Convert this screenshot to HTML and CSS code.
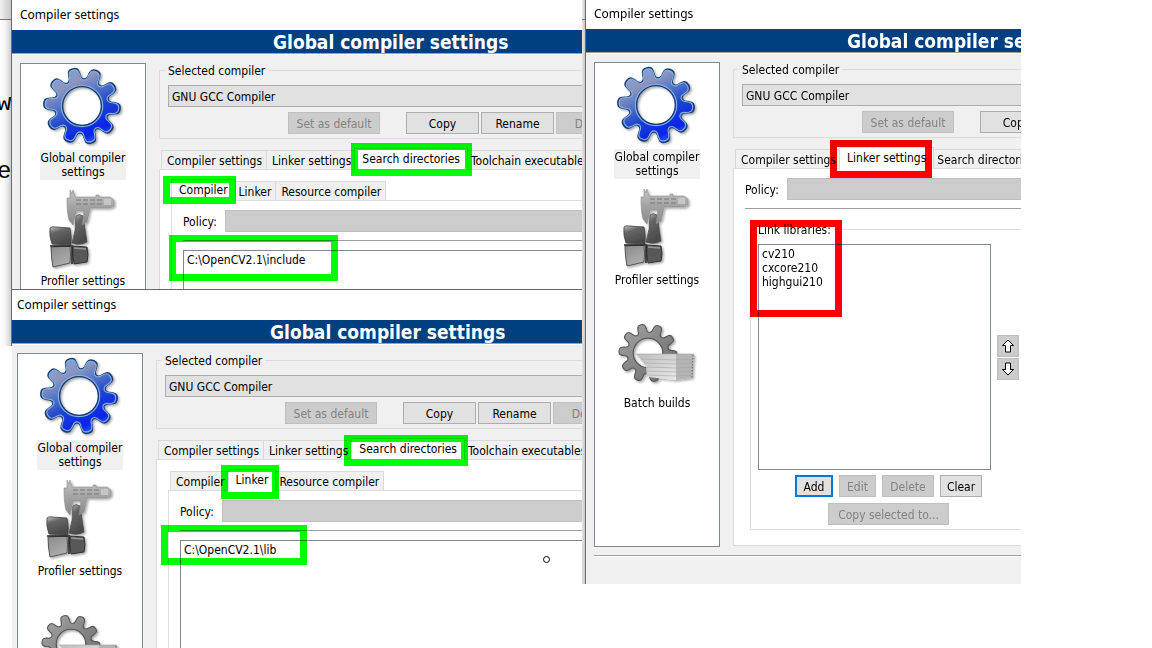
FILE: index.html
```
<!DOCTYPE html>
<html lang="en">
<head>
<meta charset="utf-8">
<title>Compiler settings</title>
<link rel="stylesheet" href="styles.css">
</head>
<body>
<svg class="defs" width="0" height="0" aria-hidden="true">
  <defs>
    <linearGradient id="blue" x1="0.2" y1="0" x2="0.7" y2="1">
      <stop offset="0" stop-color="#86a6dc"/><stop offset="0.25" stop-color="#8c94bd"/><stop offset="0.42" stop-color="#5273c8"/><stop offset="0.62" stop-color="#1c41d0"/><stop offset="0.85" stop-color="#0a22ee"/><stop offset="1" stop-color="#3c78dc"/>
    </linearGradient>
    <linearGradient id="grey" x1="0" y1="0" x2="1" y2="1">
      <stop offset="0" stop-color="#a8a8a8"/><stop offset="0.5" stop-color="#858585"/><stop offset="1" stop-color="#666"/>
    </linearGradient>
    <linearGradient id="metal" x1="0" y1="0" x2="0" y2="1">
      <stop offset="0" stop-color="#c4c4c4"/><stop offset="0.5" stop-color="#a2a2a2"/><stop offset="1" stop-color="#8a8a8a"/>
    </linearGradient>
    <linearGradient id="dark" x1="0" y1="0" x2="0.4" y2="1">
      <stop offset="0" stop-color="#c8c8c8"/><stop offset="0.35" stop-color="#666"/><stop offset="1" stop-color="#4a4a4a"/>
    </linearGradient>
    <linearGradient id="light" x1="0" y1="0" x2="0.5" y2="1">
      <stop offset="0" stop-color="#8a8a8a"/><stop offset="1" stop-color="#adadad"/>
    </linearGradient>
    <linearGradient id="paper" x1="0" y1="0" x2="1" y2="1">
      <stop offset="0" stop-color="#bdbdbd"/><stop offset="1" stop-color="#e8e8e8"/>
    </linearGradient>
    <filter id="shadow" x="-20%" y="-20%" width="150%" height="150%">
      <feDropShadow dx="1.500" dy="1.500" stdDeviation="1" flood-color="#000" flood-opacity="0.35"/>
    </filter>
    <path id="tooth" d="M25.7 -8.4C26.6 -5.8 29 -5.4 31.5 -5.6L34.5 -5.2C39.5 -4.6 39.5 4.6 34.5 5.2L31.5 5.6C29 5.4 26.6 5.8 25.7 8.4"/>
    <g id="teeth">
      <use href="#tooth" transform="rotate(4)"/><use href="#tooth" transform="rotate(40)"/><use href="#tooth" transform="rotate(76)"/><use href="#tooth" transform="rotate(112)"/><use href="#tooth" transform="rotate(148)"/><use href="#tooth" transform="rotate(184)"/><use href="#tooth" transform="rotate(220)"/><use href="#tooth" transform="rotate(256)"/><use href="#tooth" transform="rotate(292)"/><use href="#tooth" transform="rotate(328)"/>
    </g>
    <mask id="gear-mask" maskUnits="userSpaceOnUse" x="-42" y="-42" width="84" height="84">
      <use href="#teeth" fill="#fff"/><circle r="27" fill="#fff"/><circle r="19" fill="#000"/>
    </mask>
    <symbol id="icon-gear" viewBox="0 0 86 84">
      <g transform="translate(42 40)" filter="url(#shadow)">
        <rect x="-39" y="-39" width="78" height="78" fill="url(#blue)" mask="url(#gear-mask)"/>
        <g fill="none" stroke="#1c3c6c" stroke-width="1.500"><use href="#teeth"/><circle r="19.5"/></g>
        <g fill="none" stroke="#7fb0e4" stroke-width="1.200"><use href="#teeth" transform="scale(.96)"/><circle r="20.7"/></g>
      </g>
    </symbol>
    <symbol id="icon-profiler" viewBox="0 0 86 84">
      <g filter="url(#shadow)">
        <path d="M36 27Q39 24 43 27L47 53Q40 57 32 54Q36 42 36 27Z" fill="url(#dark)" stroke="#444" stroke-width=".7"/>
        <path d="M30 1L32 5L33 1L35 8H56V6H59V8H70L74 11V17L70 19H50L47 33L42 36L44 22H36L33 36L29 31Q27 24 27 9H30Z" fill="url(#metal)" stroke="#8c8c8c" stroke-width=".6"/>
        <path d="M36 11H62M36 15H62" stroke="#777" stroke-width="1" stroke-dasharray="5 2"/>
        <path d="M64 10H71V16H64Z" fill="#c6c6c6"/>
        <path d="M10 39Q12 37 15 38L30 39Q32 48 31 56L12 55Q9 47 10 39Z" fill="url(#dark)" stroke="#444" stroke-width=".8"/>
        <path d="M33 57L47 58Q49 66 47 73L34 75Q32 65 33 57Z" fill="#585858" stroke="#333" stroke-width="1"/>
        <path d="M34 59L46 60" stroke="#999" stroke-width="1.500"/>
        <path d="M11 58L30 57Q31 66 30 74L13 78Q11 68 11 58Z" fill="url(#light)" stroke="#555" stroke-width="1"/>
        <path d="M10 57H31M32 56V75" stroke="#222" stroke-width="1.5"/>
      </g>
    </symbol>
    <symbol id="icon-batch" viewBox="0 0 86 84">
      <g filter="url(#shadow)">
        <g transform="translate(34 42) scale(.76)">
          <rect x="-39" y="-39" width="78" height="78" fill="url(#grey)" mask="url(#gear-mask)"/>
          <g fill="none" stroke="#555" stroke-width="1.4"><use href="#teeth"/><circle r="19.5"/></g>
        </g>
        <path d="M22 43H62V69L33 66L32 55Z" fill="url(#paper)"/>
        <path d="M62 43H80L78 67L62 69Z" fill="#b4b4b4"/>
        <path d="M22 43H80M27 48L62 49L79 48M30 52L62 53L79 52M33 56L62 57L79 56M33 60L62 61L79 60M33 64L62 65L79 64" fill="none" stroke="#a4a4a4" stroke-width=".6"/>
        <path d="M79 44L78 67" stroke="#666" stroke-width="1" stroke-dasharray="1.5 1.5"/>
      </g>
    </symbol>
  </defs>
</svg>

<main class="desktop">
  <div class="editor editor--left" aria-hidden="true"><span class="editor__bar"></span><span class="code">w</span><span class="code">e</span></div>
  <div class="editor editor--middle" aria-hidden="true"><span class="editor__bar"></span></div>

  <section class="window window--include">
    <div class="dialog">
      <div class="titlebar">Compiler settings</div>
      <h1 class="banner">Global compiler settings</h1>
      <div class="content">
        <nav class="sidebar">
          <button class="page page--active"><svg class="page__icon"><use href="#icon-gear"/></svg><span class="page__label">Global compiler settings</span></button>
          <button class="page"><svg class="page__icon"><use href="#icon-profiler"/></svg><span class="page__label">Profiler settings</span></button>
        </nav>
        <div class="settings">
          <fieldset class="group">
            <legend>Selected compiler</legend>
            <select class="combo" aria-label="Selected compiler"><option>GNU GCC Compiler</option></select>
            <div class="actions"><button class="btn btn--wide" disabled>Set as default</button><button class="btn btn--first">Copy</button><button class="btn">Rename</button><button class="btn" disabled>Delete</button></div>
          </fieldset>
          <div class="tabs"><button class="tab">Compiler settings</button><button class="tab">Linker settings</button><button class="tab tab--active">Search directories</button><button class="tab">Toolchain executables</button></div>
          <div class="panel panel--outer">
            <div class="tabs tabs--inner"><button class="tab tab--active">Compiler</button><button class="tab">Linker</button><button class="tab">Resource compiler</button></div>
            <div class="panel">
              <div class="policy"><label for="policy-a">Policy:</label><select class="combo" id="policy-a" disabled></select></div>
              <hr class="rule">
              <ul class="list list--open"><li>C:\OpenCV2.1\include</li></ul>
            </div>
          </div>
        </div>
      </div>
    </div>
  </section>

  <section class="window window--lib">
    <div class="dialog">
      <div class="titlebar">Compiler settings</div>
      <h1 class="banner">Global compiler settings</h1>
      <div class="content">
        <nav class="sidebar">
          <button class="page page--active"><svg class="page__icon"><use href="#icon-gear"/></svg><span class="page__label">Global compiler settings</span></button>
          <button class="page"><svg class="page__icon"><use href="#icon-profiler"/></svg><span class="page__label">Profiler settings</span></button>
          <button class="page" aria-label="Batch builds"><svg class="page__icon"><use href="#icon-batch"/></svg></button>
        </nav>
        <div class="settings">
          <fieldset class="group">
            <legend>Selected compiler</legend>
            <select class="combo" aria-label="Selected compiler"><option>GNU GCC Compiler</option></select>
            <div class="actions"><button class="btn btn--wide" disabled>Set as default</button><button class="btn btn--first">Copy</button><button class="btn">Rename</button><button class="btn" disabled>Delete</button></div>
          </fieldset>
          <div class="tabs"><button class="tab">Compiler settings</button><button class="tab">Linker settings</button><button class="tab tab--active">Search directories</button><button class="tab">Toolchain executables</button></div>
          <div class="panel panel--outer">
            <div class="tabs tabs--inner"><button class="tab">Compiler</button><button class="tab tab--active">Linker</button><button class="tab">Resource compiler</button></div>
            <div class="panel">
              <div class="policy"><label for="policy-b">Policy:</label><select class="combo" id="policy-b" disabled></select></div>
              <hr class="rule">
              <ul class="list list--open"><li>C:\OpenCV2.1\lib</li></ul>
            </div>
          </div>
        </div>
      </div>
    </div>
  </section>

  <section class="window window--linker">
    <div class="dialog">
      <div class="titlebar">Compiler settings</div>
      <h1 class="banner">Global compiler settings</h1>
      <div class="content">
        <nav class="sidebar">
          <button class="page page--active"><svg class="page__icon"><use href="#icon-gear"/></svg><span class="page__label">Global compiler settings</span></button>
          <button class="page"><svg class="page__icon"><use href="#icon-profiler"/></svg><span class="page__label">Profiler settings</span></button>
          <button class="page"><svg class="page__icon"><use href="#icon-batch"/></svg><span class="page__label">Batch builds</span></button>
        </nav>
        <div class="settings">
          <fieldset class="group">
            <legend>Selected compiler</legend>
            <select class="combo" aria-label="Selected compiler"><option>GNU GCC Compiler</option></select>
            <div class="actions"><button class="btn btn--wide" disabled>Set as default</button><button class="btn btn--first">Copy</button></div>
          </fieldset>
          <div class="tabs"><button class="tab">Compiler settings</button><button class="tab tab--active">Linker settings</button><button class="tab">Search directories</button></div>
          <div class="panel">
            <div class="policy"><label for="policy-c">Policy:</label><select class="combo" id="policy-c" disabled></select></div>
            <hr class="rule">
            <fieldset class="group group--libs">
              <legend>Link libraries:</legend>
              <div class="libs">
                <div class="libs__row">
                  <ul class="list list--libs"><li>cv210</li><li>cxcore210</li><li>highgui210</li></ul>
                  <div class="movers">
                    <button class="btn btn--arrow" aria-label="Move up"><svg width="14" height="14" viewBox="0 0 14 14"><path d="M7 1L12.500 6.500H9.500V13H4.500V6.500H1.500Z"/></svg></button>
                    <button class="btn btn--arrow" aria-label="Move down"><svg width="14" height="14" viewBox="0 0 14 14"><path d="M7 13L12.500 7.500H9.500V1H4.500V7.500H1.500Z"/></svg></button>
                  </div>
                </div>
                <div class="libs__buttons"><button class="btn btn--add">Add</button><button class="btn btn--edit" disabled>Edit</button><button class="btn btn--delete" disabled>Delete</button><button class="btn btn--clear">Clear</button></div>
                <button class="btn btn--copy" disabled>Copy selected to...</button>
              </div>
            </fieldset>
          </div>
        </div>
      </div>
      <hr class="footer-rule">
    </div>
  </section>

  <i class="mark mark--search-a"></i>
  <i class="mark mark--compiler"></i>
  <i class="mark mark--include"></i>
  <i class="mark mark--search-b"></i>
  <i class="mark mark--linker"></i>
  <i class="mark mark--lib"></i>
  <i class="mark mark--red mark--linker-settings"></i>
  <i class="mark mark--red mark--libraries"></i>
  <i class="cursor"></i>
</main>
</body>
</html>
```

FILE: styles.css
```
* { box-sizing: border-box; }

body {
  margin: 0;
  background: #fff;
  color: #000;
  font: 12px/14px "DejaVu Sans Condensed", "DejaVu Sans", sans-serif;
  font-stretch: condensed;
}

button, select { font: inherit; color: inherit; margin: 0; border-radius: 0; }
.defs { position: absolute; }

.desktop { position: relative; min-height: 100vh; overflow: hidden; isolation: isolate; }

/* strips of the editor visible between the dialogs */
.editor {
  position: absolute;
  top: 0;
  overflow: hidden;
  display: flex;
  flex-direction: column;
  gap: 44px;
  border-right: 1px solid #6c6c6c;
  font: 24px/24px "Liberation Mono", monospace;
}
.editor--left { left: 0; width: 12px; height: 346px; background: linear-gradient(90deg, #fff, #f4f4f4 50%, #cfcfcf); }
.editor--middle { left: 582px; width: 4px; height: 584px; background: linear-gradient(90deg, #e4e4e4, #c8c8c8); }
.editor__bar { flex: none; height: 20px; margin-bottom: 28px; background: linear-gradient(90deg, #f0f0f0, #c8c8c8); border-bottom: 1px solid #777; }
.code { height: 24px; margin-left: -3px; }

.window { position: absolute; overflow: hidden; background: #f0f0f0; }
.window--include { left: 12px; top: 0; width: 570px; height: 289px; }
.window--lib { left: 12px; top: 289px; width: 570px; height: 359px; border-top: 1px solid #666; }
.window--linker { left: 586px; top: 0; width: 435px; height: 584px; }
.window--lib .dialog { margin-left: -3px; }

.titlebar { height: 30px; padding: 0 8px; background: #fff; font: 12px/30px "Noto Sans", sans-serif; }
.window--linker .titlebar { height: 29px; line-height: 28px; }

.banner {
  margin: 0;
  height: 25px;
  padding-left: 261px;
  background: #004080;
  border-bottom: 1px solid #fff;
  box-shadow: inset 0 -1px #a0a0a0;
  color: #fff;
  font-size: 19px;
  font-weight: bold;
  line-height: 24px;
  white-space: nowrap;
}

.content { display: flex; padding: 8px 0 0 8px; }

.sidebar { flex: none; width: 126px; height: 485px; border: 1px solid #828790; background: #fff; }
.page {
  display: flex;
  flex-direction: column;
  align-items: center;
  width: 100%;
  height: 123px;
  padding: 2px 0 0;
  border: 0;
  background: none;
}
.page__icon { flex: none; width: 86px; height: 84px; }
.page__label { max-width: 86px; padding: 1px 0; text-align: center; white-space: nowrap; }
.page--active .page__label { white-space: normal; background: #f0f0f0; }

.settings { flex: 1; min-width: 0; margin-left: 13px; }

.group { min-width: 0; margin: 0; padding: 8px 0 4px 8px; border: 1px solid #dcdcdc; border-right: 0; }
.group legend { height: 14px; margin-left: -3px; padding: 0 3px; line-height: 16px; }

.combo {
  display: block;
  width: 100%;
  height: 22px;
  padding: 2px 3px 0;
  border: 1px solid #adadad;
  border-right: 0;
  background: #e1e1e1;
  appearance: none;
}
.combo:disabled { background: #ccc; border-color: #bfbfbf; opacity: 1; }

.actions { display: flex; gap: 2px; margin-top: 5px; padding-left: 120px; }
.btn { flex: none; width: 73px; height: 22px; padding: 2px 0 0; border: 1px solid #adadad; background: #e1e1e1; white-space: nowrap; }
.btn:disabled { background: #ccc; border-color: #bfbfbf; color: #838383; }
.btn--wide { width: 92px; }
.btn--first { margin-left: 24px; }

.tabs { display: flex; align-items: flex-end; height: 21px; margin-top: 9px; padding-left: 2px; }
.tab {
  flex: none;
  height: 19px;
  padding: 2px 4px 0 5px;
  border: 1px solid #d9d9d9;
  border-width: 1px 1px 0 0;
  background: #f0f0f0;
  white-space: nowrap;
}
.tab:first-child { border-left-width: 1px; }
.tab--active {
  position: relative;
  height: 22px;
  margin: 0 -2px -1px;
  padding: 0 7px 2px;
  border-left-width: 1px;
  background: #fff;
}

.panel { padding: 9px 0 15px 11px; border: 1px solid #dcdcdc; border-right: 0; background: #fff; }
.tabs--inner { margin-top: 0; }

.policy { display: flex; align-items: center; }
.policy label { flex: none; width: 42px; padding-top: 2px; }
.rule { height: 1px; margin: 8px 0 0; border: 0; background: #a0a0a0; }

.list { margin: 0; padding: 2px 3px; border: 1px solid #828790; background: #fff; list-style: none; }
.list--open { min-height: 300px; margin-top: 9px; border-right: 0; }
.list--libs { width: 233px; height: 226px; }

.group--libs { margin: 13px 0 0 5px; padding-left: 7px; }
.libs { display: flex; flex-direction: column; align-items: center; width: fit-content; }
.libs__row { display: flex; align-items: center; gap: 6px; }
.libs__buttons { display: flex; gap: 6px; margin: 5px 0 6px; }
.movers { display: flex; flex-direction: column; gap: 1px; }
.btn--arrow { display: grid; place-items: center; width: 22px; padding: 0; background: #ccc; border-color: #bfbfbf; }
.btn--arrow path { fill: #fff; stroke: #000; stroke-width: 1; }
.btn--add { width: 38px; border: 2px solid #0078d7; }
.btn--edit { width: 37px; }
.btn--delete { width: 52px; }
.btn--clear { width: 42px; }
.btn--copy { width: 121px; }

.footer-rule { height: 2px; margin: 8px 0 0 8px; border: 0; border-top: 1px solid #a0a0a0; background: #fff; }

/* highlighter frames drawn over the dialogs */
.mark { position: absolute; border: 7px solid #0f0; mix-blend-mode: multiply; }
.mark--red { border-color: #f00; }
.mark--search-a { left: 351px; top: 143px; width: 121px; height: 33px; }
.mark--compiler { left: 163px; top: 176px; width: 73px; height: 28px; }
.mark--include { left: 169px; top: 235px; width: 169px; height: 46px; }
.mark--search-b { left: 344px; top: 435px; width: 124px; height: 31px; }
.mark--linker { left: 221px; top: 465px; width: 58px; height: 34px; }
.mark--lib { left: 161px; top: 525px; width: 146px; height: 40px; }
.mark--linker-settings { left: 830px; top: 140px; width: 102px; height: 38px; }
.mark--libraries { left: 750px; top: 220px; width: 92px; height: 97px; }

.cursor { position: absolute; left: 543px; top: 556px; width: 7px; height: 7px; border: 1px solid #000; border-radius: 50%; }
```
